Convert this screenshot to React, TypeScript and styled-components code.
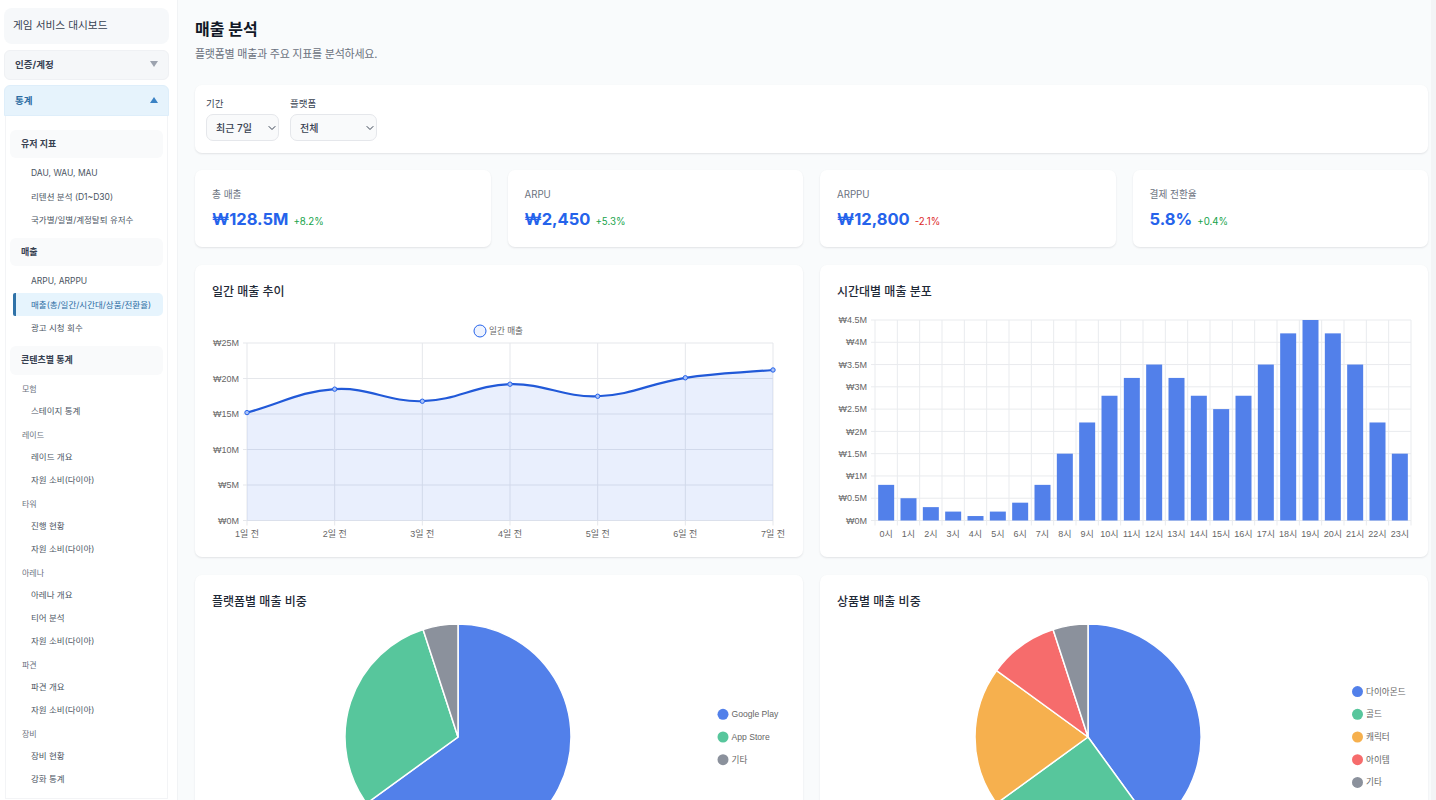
import React from 'react';
import styled, { createGlobalStyle } from 'styled-components';
import { ChevronDown } from 'lucide-react';

const GlobalStyle = createGlobalStyle`
  html, body {
    margin: 0;
    height: 100%;
    overflow: hidden;
  }
  body {
    font-family: Inter, "Noto Sans CJK KR", sans-serif;
    color: #111827;
    background: #f9fafb;
  }
  * {
    box-sizing: border-box;
  }
`;

const Shell = styled.div`
  display: flex;
  width: 100%;
  height: 800px;
  overflow: hidden;
`;

const Sidebar = styled.aside`
  flex: 0 0 178px;
  height: 800px;
  padding: 8px 8px 0 4px;
  background: #ffffff;
  border-right: 1px solid #f1f3f5;
  overflow: hidden;
`;

const Brand = styled.div`
  height: 36px;
  margin-bottom: 6px;
  padding: 0 0 3px 9px;
  display: flex;
  align-items: center;
  font-size: 10.7px;
  color: #374151;
  background: #f6f8fa;
  border-radius: 8px;
`;

const MenuHead = styled.div<{ $open?: boolean }>`
  height: ${props => (props.$open ? '31px' : '30px')};
  margin-bottom: ${props => (props.$open ? '0' : '5px')};
  padding: 0 10px 2px;
  display: flex;
  align-items: center;
  justify-content: space-between;
  font-size: 9.5px;
  font-weight: 700;
  color: ${props => (props.$open ? '#2b6ca3' : '#374151')};
  background: ${props => (props.$open ? '#e6f3fc' : '#f5f7f9')};
  border: 1px solid ${props => (props.$open ? '#deeefa' : '#eff1f4')};
  border-radius: ${props => (props.$open ? '6px 6px 0 0' : '6px')};
`;

const Caret = styled.span<{ $open?: boolean }>`
  width: 0;
  height: 0;
  border-left: 4px solid transparent;
  border-right: 4px solid transparent;
  border-top: ${props => (props.$open ? '0' : '6px solid #9ca3af')};
  border-bottom: ${props => (props.$open ? '6px solid #3b82c4' : '0')};
`;

const Panel = styled.div`
  margin-left: 1px;
  width: 163px;
  padding: 14px 4px 0;
  background: #ffffff;
  border: 1px solid #f3f4f6;
  border-top: 0;
`;

const GroupHead = styled.div<{ $tall?: boolean }>`
  height: ${props => (props.$tall ? '29px' : '28px')};
  padding: 0 0 2px 11px;
  display: flex;
  align-items: center;
  font-size: 9px;
  font-weight: 700;
  color: #374151;
  background: #f9fafb;
  border-radius: 6px;
`;

const Items = styled.div`
  padding: 3.5px 0 7.5px;
`;

const SubRow = styled.div`
  & + & {
    margin-top: 3.2px;
  }
`;

const SubLabel = styled.div`
  height: 20px;
  padding: 0 0 1px 12px;
  display: flex;
  align-items: center;
  font-size: 8px;
  color: #6b7280;
`;

const Item = styled.div<{ $active?: boolean }>`
  height: 23px;
  margin-left: 3px;
  padding: 0 0 1px 15px;
  display: flex;
  align-items: center;
  font-size: 8.5px;
  white-space: nowrap;
  color: ${props => (props.$active ? '#2b6ca3' : '#4b5563')};
  background: ${props => (props.$active ? '#e6f4fd' : 'transparent')};
  border-left: 3px solid ${props => (props.$active ? '#2f72a8' : 'transparent')};
  border-radius: ${props => (props.$active ? '2px 5px 5px 2px' : '0')};
`;

const Main = styled.main`
  flex: 1;
  min-width: 0;
  padding: 17px 3px 0 17px;
  background: #f9fbfc;
  overflow: hidden;
`;

const ScrollTrack = styled.div`
  flex: 0 0 5px;
  background: #f3f4f6;
`;

const PageTitle = styled.h1`
  margin: 0;
  font-size: 16px;
  line-height: 24px;
  font-weight: 700;
  color: #111827;
`;

const PageSub = styled.p`
  margin: 3px 0 21px;
  font-size: 11px;
  letter-spacing: -0.25px;
  line-height: 20px;
  color: #6b7280;
`;

const Card = styled.section`
  background: #ffffff;
  border-radius: 7px;
  box-shadow: 0 1px 2px rgba(17, 24, 39, 0.1);
`;

const FilterCard = styled(Card)`
  display: flex;
  gap: 11px;
  height: 68px;
  padding: 12px 11px;
  margin-bottom: 17px;
`;

const FilterField = styled.label<{ $width: number }>`
  display: flex;
  flex-direction: column;
  gap: 3px;
  width: ${props => props.$width}px;
  font-size: 9.5px;
  line-height: 14px;
  color: #374151;
`;

const SelectBox = styled.div`
  position: relative;
  height: 28px;
  svg {
    position: absolute;
    right: 1px;
    top: 8px;
    color: #374151;
    pointer-events: none;
  }
`;

const Select = styled.select`
  width: 100%;
  height: 100%;
  padding: 0 0 0 9px;
  appearance: none;
  font-family: inherit;
  font-size: 10px;
  font-weight: 500;
  color: #374151;
  background: #f9fafb;
  border: 1px solid #e5e7eb;
  border-radius: 7px;
`;

const StatGrid = styled.div`
  display: grid;
  grid-template-columns: repeat(4, 1fr);
  gap: 17px;
  margin-bottom: 18px;
`;

const StatCard = styled(Card)`
  height: 77px;
  padding: 18px 17px 0;
`;

const StatLabel = styled.div`
  font-size: 9.7px;
  line-height: 14px;
  color: #6b7280;
`;

const StatRow = styled.div`
  display: flex;
  align-items: baseline;
  gap: 5px;
  margin-top: 4px;
`;

const StatValue = styled.span`
  font-size: 16.5px;
  line-height: 26px;
  font-weight: 700;
  color: #2563eb;
`;

const Delta = styled.span<{ $down?: boolean }>`
  font-size: 9.7px;
  color: ${props => (props.$down ? '#dc2626' : '#16a34a')};
`;

const ChartGrid = styled.div`
  display: grid;
  grid-template-columns: repeat(2, 1fr);
  gap: 18px 17px;
`;

const ChartCard = styled(Card)`
  height: 292px;
  padding: 18px 17px 0;
`;

const ChartTitle = styled.h3`
  margin: 0;
  font-size: 12px;
  line-height: 18px;
  font-weight: 500;
  color: #1f2937;
`;

const ChartSvg = styled.svg`
  display: block;
  margin-top: 9px;
  overflow: visible;
`;

const AxisText = styled.text`
  font-family: "Liberation Sans", "Noto Sans CJK KR", sans-serif;
  font-size: 9px;
  fill: #666666;
`;

const LegendText = styled(AxisText)`
  font-size: 8.6px;
`;

const PLOT_TOP = 10; // svg origin sits 310px down the page

const yLabel = (v: number) => `₩${v}M`;

const LINE_VALUES = [15.2, 18.5, 16.8, 19.2, 17.5, 20.1, 21.2];

const LineChart = () => {
  const left = 35;
  const right = 561;
  const top = PLOT_TOP + 23;
  const bottom = PLOT_TOP + 200.5;
  const step = (right - left) / 6;
  const pts = LINE_VALUES.map((v, i) => ({
    x: left + i * step,
    y: bottom - (v / 25) * (bottom - top),
  }));
  // same spline as the chart lib: tension 0.4
  const ctrl = pts.map((cur, i) => {
    const prev = pts[i - 1] || cur;
    const next = pts[i + 1] || cur;
    const d01 = Math.hypot(cur.x - prev.x, cur.y - prev.y);
    const d12 = Math.hypot(next.x - cur.x, next.y - cur.y);
    const sum = d01 + d12;
    const fa = (0.4 * d01) / sum;
    const fb = (0.4 * d12) / sum;
    return {
      px: cur.x - fa * (next.x - prev.x),
      py: cur.y - fa * (next.y - prev.y),
      nx: cur.x + fb * (next.x - prev.x),
      ny: cur.y + fb * (next.y - prev.y),
    };
  });
  let d = `M${pts[0].x} ${pts[0].y}`;
  for (let i = 1; i < pts.length; i++) {
    d += ` C${ctrl[i - 1].nx} ${ctrl[i - 1].ny} ${ctrl[i].px} ${ctrl[i].py} ${pts[i].x} ${pts[i].y}`;
  }
  const area = `${d} L${right} ${bottom} L${left} ${bottom} Z`;
  return (
    <ChartSvg width={574} height={232} viewBox="0 0 574 232">
      {[0, 5, 10, 15, 20, 25].map(v => {
        const y = bottom - (v / 25) * (bottom - top);
        return (
          <g key={v}>
            <line x1={left - 4} x2={right} y1={y} y2={y} stroke="#e5e7eb" />
            <AxisText x={left - 8} y={y + 3.2} textAnchor="end">
              {yLabel(v)}
            </AxisText>
          </g>
        );
      })}
      {pts.map((p, i) => (
        <g key={i}>
          <line x1={p.x} x2={p.x} y1={top} y2={bottom + 5} stroke="#e5e7eb" />
          <AxisText x={p.x} y={bottom + 16} textAnchor="middle">
            {i + 1}일 전
          </AxisText>
        </g>
      ))}
      <path d={area} fill="rgba(37,99,235,0.1)" />
      <path d={d} fill="none" stroke="#2159d8" strokeWidth={2.2} />
      {pts.map((p, i) => (
        <circle key={i} cx={p.x} cy={p.y} r={2.2} fill="#a9c1f6" stroke="#2563eb" strokeWidth={1} />
      ))}
      <circle cx={268} cy={PLOT_TOP + 11} r={6} fill="#eef3fe" stroke="#2563eb" strokeWidth={1} />
      <LegendText x={277} y={PLOT_TOP + 14}>
        일간 매출
      </LegendText>
    </ChartSvg>
  );
};

const BAR_VALUES = [
  0.8, 0.5, 0.3, 0.2, 0.1, 0.2, 0.4, 0.8, 1.5, 2.2, 2.8, 3.2, 3.5, 3.2, 2.8, 2.5, 2.8, 3.5, 4.2,
  4.5, 4.2, 3.5, 2.2, 1.5,
];

const BarChart = () => {
  const left = 38;
  const right = 574;
  const top = PLOT_TOP;
  const bottom = PLOT_TOP + 200.5;
  const cat = (right - left) / 24;
  const barW = 16;
  const ticks = [0, 0.5, 1, 1.5, 2, 2.5, 3, 3.5, 4, 4.5];
  return (
    <ChartSvg width={574} height={232} viewBox="0 0 574 232">
      {ticks.map(v => {
        const y = bottom - (v / 4.5) * (bottom - top);
        return (
          <g key={v}>
            <line x1={left - 4} x2={right} y1={y} y2={y} stroke="#e9ebee" />
            <AxisText x={left - 8} y={y + 3.2} textAnchor="end">
              {yLabel(v)}
            </AxisText>
          </g>
        );
      })}
      {Array.from({ length: 25 }).map((_, i) => (
        <line
          key={i}
          x1={left + i * cat}
          x2={left + i * cat}
          y1={top}
          y2={bottom + 5}
          stroke="#e9ebee"
        />
      ))}
      {BAR_VALUES.map((v, i) => {
        const h = (v / 4.5) * (bottom - top);
        const x = left + i * cat + (cat - barW) / 2;
        return (
          <g key={i}>
            <rect x={x} y={bottom - h} width={barW} height={h} fill="#5280ea" />
            <AxisText x={left + i * cat + cat / 2} y={bottom + 16} textAnchor="middle">
              {i}시
            </AxisText>
          </g>
        );
      })}
    </ChartSvg>
  );
};

type Slice = { label: string; value: number; color: string };

const PLATFORM: Slice[] = [
  { label: 'Google Play', value: 65, color: '#5280ea' },
  { label: 'App Store', value: 30, color: '#57c69c' },
  { label: '기타', value: 5, color: '#8b919c' },
];

const PRODUCT: Slice[] = [
  { label: '다이아몬드', value: 40, color: '#5280ea' },
  { label: '골드', value: 25, color: '#57c69c' },
  { label: '캐릭터', value: 20, color: '#f6b04e' },
  { label: '아이템', value: 10, color: '#f66c6c' },
  { label: '기타', value: 5, color: '#8b919c' },
];

const PieChart = ({ data, cx, legendX }: { data: Slice[]; cx: number; legendX: number }) => {
  const cy = 117;
  const r = 113;
  const legendStart = cy - ((data.length - 1) * 22.7) / 2;
  let acc = 0;
  return (
    <ChartSvg width={574} height={250} viewBox="0 0 574 250">
      {data.map(s => {
        const a0 = (acc / 100) * Math.PI * 2;
        acc += s.value;
        const a1 = (acc / 100) * Math.PI * 2;
        const large = s.value > 50 ? 1 : 0;
        const d = `M${cx} ${cy} L${cx + r * Math.sin(a0)} ${cy - r * Math.cos(a0)} A${r} ${r} 0 ${large} 1 ${
          cx + r * Math.sin(a1)
        } ${cy - r * Math.cos(a1)} Z`;
        return <path key={s.label} d={d} fill={s.color} stroke="#ffffff" strokeWidth={1.5} />;
      })}
      {data.map((s, i) => (
        <g key={s.label}>
          <circle cx={legendX} cy={legendStart + i * 22.7} r={5.5} fill={s.color} />
          <LegendText x={legendX + 8.5} y={legendStart + i * 22.7 + 3}>
            {s.label}
          </LegendText>
        </g>
      ))}
    </ChartSvg>
  );
};

const NAV = [
  {
    head: '유저 지표',
    rows: [{ items: ['DAU, WAU, MAU', '리텐션 분석 (D1~D30)', '국가별/일별/계정탈퇴 유저수'] }],
  },
  {
    head: '매출',
    rows: [{ items: ['ARPU, ARPPU', '매출(총/일간/시간대/상품/전환율)', '광고 시청 회수'] }],
  },
  {
    head: '콘텐츠별 통계',
    tall: true,
    rows: [
      { label: '모험', items: ['스테이지 통계'] },
      { label: '레이드', items: ['레이드 개요', '자원 소비(다이아)'] },
      { label: '타워', items: ['진행 현황', '자원 소비(다이아)'] },
      { label: '아레나', items: ['아레나 개요', '티어 분석', '자원 소비(다이아)'] },
      { label: '파견', items: ['파견 개요', '자원 소비(다이아)'] },
      { label: '장비', items: ['장비 현황', '강화 통계'] },
    ],
  },
];

const ACTIVE = '매출(총/일간/시간대/상품/전환율)';

const STATS = [
  { label: '총 매출', value: '₩128.5M', delta: '+8.2%' },
  { label: 'ARPU', value: '₩2,450', delta: '+5.3%' },
  { label: 'ARPPU', value: '₩12,800', delta: '-2.1%', down: true },
  { label: '결제 전환율', value: '5.8%', delta: '+0.4%' },
];

const App = () => {
  return (
    <Shell>
      <GlobalStyle />
      <Sidebar>
        <Brand>게임 서비스 대시보드</Brand>
        <MenuHead>
          인증/계정
          <Caret />
        </MenuHead>
        <MenuHead $open>
          통계
          <Caret $open />
        </MenuHead>
        <Panel>
          {NAV.map(group => (
            <div key={group.head}>
              <GroupHead $tall={group.tall}>{group.head}</GroupHead>
              <Items>
                {group.rows.map((row, i) => (
                  <SubRow key={i}>
                    {row.label && <SubLabel>{row.label}</SubLabel>}
                    {row.items.map(item => (
                      <Item key={item} $active={item === ACTIVE}>
                        {item}
                      </Item>
                    ))}
                  </SubRow>
                ))}
              </Items>
            </div>
          ))}
        </Panel>
      </Sidebar>
      <Main>
        <PageTitle>매출 분석</PageTitle>
        <PageSub>플랫폼별 매출과 주요 지표를 분석하세요.</PageSub>
        <FilterCard>
          <FilterField $width={73}>
            기간
            <SelectBox>
              <Select defaultValue="7">
                <option value="7">최근 7일</option>
                <option value="30">최근 30일</option>
              </Select>
              <ChevronDown size={12} strokeWidth={2} />
            </SelectBox>
          </FilterField>
          <FilterField $width={87}>
            플랫폼
            <SelectBox>
              <Select defaultValue="all">
                <option value="all">전체</option>
                <option value="google">Google Play</option>
              </Select>
              <ChevronDown size={12} strokeWidth={2} />
            </SelectBox>
          </FilterField>
        </FilterCard>
        <StatGrid>
          {STATS.map(s => (
            <StatCard key={s.label}>
              <StatLabel>{s.label}</StatLabel>
              <StatRow>
                <StatValue>{s.value}</StatValue>
                <Delta $down={s.down}>{s.delta}</Delta>
              </StatRow>
            </StatCard>
          ))}
        </StatGrid>
        <ChartGrid>
          <ChartCard>
            <ChartTitle>일간 매출 추이</ChartTitle>
            <LineChart />
          </ChartCard>
          <ChartCard>
            <ChartTitle>시간대별 매출 분포</ChartTitle>
            <BarChart />
          </ChartCard>
          <ChartCard>
            <ChartTitle>플랫폼별 매출 비중</ChartTitle>
            <PieChart data={PLATFORM} cx={246} legendX={511} />
          </ChartCard>
          <ChartCard>
            <ChartTitle>상품별 매출 비중</ChartTitle>
            <PieChart data={PRODUCT} cx={251} legendX={520.5} />
          </ChartCard>
        </ChartGrid>
      </Main>
      <ScrollTrack />
    </Shell>
  );
};

export default App;
